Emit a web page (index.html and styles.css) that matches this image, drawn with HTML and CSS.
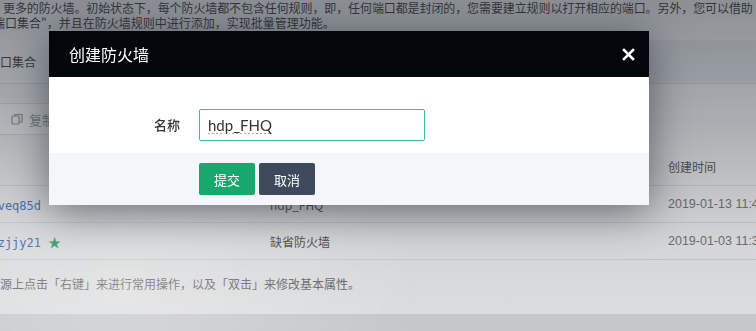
FILE: index.html
```html
<!DOCTYPE html>
<html lang="zh-CN">
<head>
    <meta charset="UTF-8">
    <meta name="viewport" content="width=device-width, initial-scale=1.0">
    <title>创建防火墙</title>
    <link rel="stylesheet" href="styles.css">
</head>
<body>
    <div class="page">
        <div class="intro">
            <p class="line-one">更多的防火墙。初始状态下，每个防火墙都不包含任何规则，即，任何端口都是封闭的，您需要建立规则以打开相应的端口。另外，您可以借助</p>
            <p class="line-two">端口集合"，并且在防火墙规则中进行添加，实现批量管理功能。</p>
        </div>

        <div class="tabs">
            <span class="tab">端口集合</span>
        </div>

        <div class="toolbar">
            <button class="tool-btn">
                <svg width="12" height="12" viewBox="0 0 12 12"><rect x="1" y="3" width="7" height="8" rx="1" fill="none" stroke="currentColor" stroke-width="1.2"/><path d="M4 3V1.5h7V9H8" fill="none" stroke="currentColor" stroke-width="1.2"/></svg>
                复制
            </button>
        </div>

        <table class="list">
            <thead>
                <tr>
                    <th class="col-id">ID</th>
                    <th class="col-name">名称</th>
                    <th class="col-time">创建时间</th>
                </tr>
            </thead>
            <tbody>
                <tr>
                    <td class="col-id"><a class="res-id">fw-veq85d</a></td>
                    <td class="col-name">hdp_FHQ</td>
                    <td class="col-time">2019-01-13 11:45:02</td>
                </tr>
                <tr>
                    <td class="col-id"><a class="res-id">fw-zjjy21</a><span class="star">★</span></td>
                    <td class="col-name">缺省防火墙</td>
                    <td class="col-time">2019-01-03 11:32:17</td>
                </tr>
            </tbody>
        </table>

        <p class="tip">在资源上点击「右键」来进行常用操作，以及「双击」来修改基本属性。</p>
        <div class="bottom-band"></div>
    </div>

    <div class="mask"></div>

    <div class="modal">
        <div class="modal-header">
            <h3>创建防火墙</h3>
            <button class="close-btn" aria-label="关闭">
                <svg width="13" height="13" viewBox="0 0 13 13"><path d="M2 2L11 11M11 2L2 11" stroke="#fff" stroke-width="2.6" stroke-linecap="square"/></svg>
            </button>
        </div>
        <div class="modal-body">
            <label class="field-label" for="fw-name">名称</label>
            <input id="fw-name" class="field-input" type="text" value="hdp_FHQ">
        </div>
        <div class="modal-footer">
            <button class="btn btn-primary">提交</button>
            <button class="btn btn-dark">取消</button>
        </div>
    </div>
</body>
</html>
```

FILE: styles.css
```css
body {
    font-family: "Noto Sans CJK SC", "Noto Sans", sans-serif;
    margin: 0;
    padding: 0;
    width: 756px;
    height: 331px;
    overflow: hidden;
    background-color: #f2f2f2;
    color: #333;
    font-size: 12px;
}

.page {
    height: 331px;
    overflow: hidden;
    display: flex;
    flex-direction: column;
}

.intro {
    height: 40px;
    white-space: nowrap;
    overflow: hidden;
}
.intro p {
    margin: 0;
    line-height: 15px;
    color: #3a3a3a;
}
.line-one {
    margin-left: 3px !important;
    letter-spacing: -0.1px;
}
.line-two {
    margin-left: -7px !important;
}

.tabs {
    height: 43px;
    display: flex;
    align-items: stretch;
    border-bottom: 1px solid #ddd;
    background-color: #e6e8ea;
}
.tab {
    display: flex;
    align-items: center;
    margin-left: -12px;
    padding: 0 18px 0 0;
    background-color: #f4f5f6;
    color: #444;
}

.toolbar {
    height: 64px;
    padding-top: 19px;
    box-sizing: border-box;
}
.tool-btn {
    display: flex;
    align-items: center;
    gap: 6px;
    height: 32px;
    margin-left: -8px;
    padding: 0 12px 0 18px;
    border: 1px solid #ddd;
    background-color: #fafafa;
    color: #999;
    font-family: inherit;
    font-size: 13px;
    border-radius: 2px;
}

.list {
    width: 892px;
    flex-shrink: 0;
    table-layout: fixed;
    border-collapse: collapse;
    margin-left: -24px;
    white-space: nowrap;
}
.list th,
.list td {
    text-align: left;
    padding: 0;
    border-bottom: 1px solid #dcdcdc;
    font-weight: normal;
    overflow: hidden;
}
.list th {
    height: 37px;
    color: #555;
}
.list td {
    height: 36px;
    color: #444;
}
.col-id {
    width: 294px;
}
.col-name {
    width: 398px;
}
.col-time {
    width: 200px;
}
.res-id {
    font-family: "DejaVu Sans Mono", monospace;
    font-size: 12px;
    color: #2b65b8;
}
.star {
    color: #1a9e5f;
    margin-left: 7px;
    font-size: 13px;
}
td.col-time {
    color: #777;
    font-family: "Liberation Sans", "Noto Sans CJK SC", sans-serif;
    font-size: 12.5px;
}

.tip {
    margin: 0;
    height: 54px;
    line-height: 48px;
    margin-left: -24px;
    color: #666;
    white-space: nowrap;
}

.bottom-band {
    flex: 1;
    background-color: #d8d9db;
}

.mask {
    position: fixed;
    left: 0;
    top: 0;
    width: 756px;
    height: 331px;
    background:
        radial-gradient(ellipse 420px 260px at 120px 290px, rgba(255, 255, 255, 0.3), rgba(255, 255, 255, 0) 70%),
        linear-gradient(to bottom, rgba(40, 48, 58, 0.5) 0%, rgba(40, 48, 58, 0.36) 35%, rgba(40, 48, 58, 0.14) 75%, rgba(40, 48, 58, 0.1) 100%);
}

.modal {
    position: absolute;
    left: 49px;
    top: 31px;
    width: 600px;
    background-color: #fff;
    box-shadow: 0 6px 40px rgba(30, 38, 48, 0.6);
}

.modal-header {
    height: 46px;
    background-color: #03060a;
    display: flex;
    align-items: center;
    justify-content: space-between;
    padding: 0 14px 0 20px;
}
.modal-header h3 {
    margin: 0;
    color: #fff;
    font-size: 16px;
    font-weight: normal;
}
.close-btn {
    background: none;
    border: none;
    padding: 0;
    display: flex;
    cursor: pointer;
}

.modal-body {
    height: 76px;
    box-sizing: border-box;
    padding-top: 32px;
    display: flex;
    align-items: flex-start;
}
.field-label {
    width: 131px;
    height: 32px;
    line-height: 32px;
    text-align: right;
    padding-right: 19px;
    font-size: 13px;
    font-weight: 500;
    color: #333;
}
.field-input {
    width: 226px;
    height: 32px;
    box-sizing: border-box;
    border: 1px solid #3cbf8c;
    border-radius: 2px;
    padding: 0 8px;
    font-family: "Lato", "Noto Sans", sans-serif;
    font-size: 15px;
    color: #333;
    outline: none;
    text-decoration: underline dotted #e86a6a;
    text-underline-offset: 3px;
}

.modal-footer {
    height: 52px;
    box-sizing: border-box;
    background-color: #f5f6fa;
    padding: 10px 0 0 150px;
    display: flex;
    gap: 4px;
}
.btn {
    width: 56px;
    height: 32px;
    border: none;
    border-radius: 2px;
    color: #fff;
    font-family: inherit;
    font-size: 13px;
    cursor: pointer;
}
.btn-primary {
    background-color: #18a86e;
}
.btn-dark {
    background-color: #3d4a5b;
}
```
